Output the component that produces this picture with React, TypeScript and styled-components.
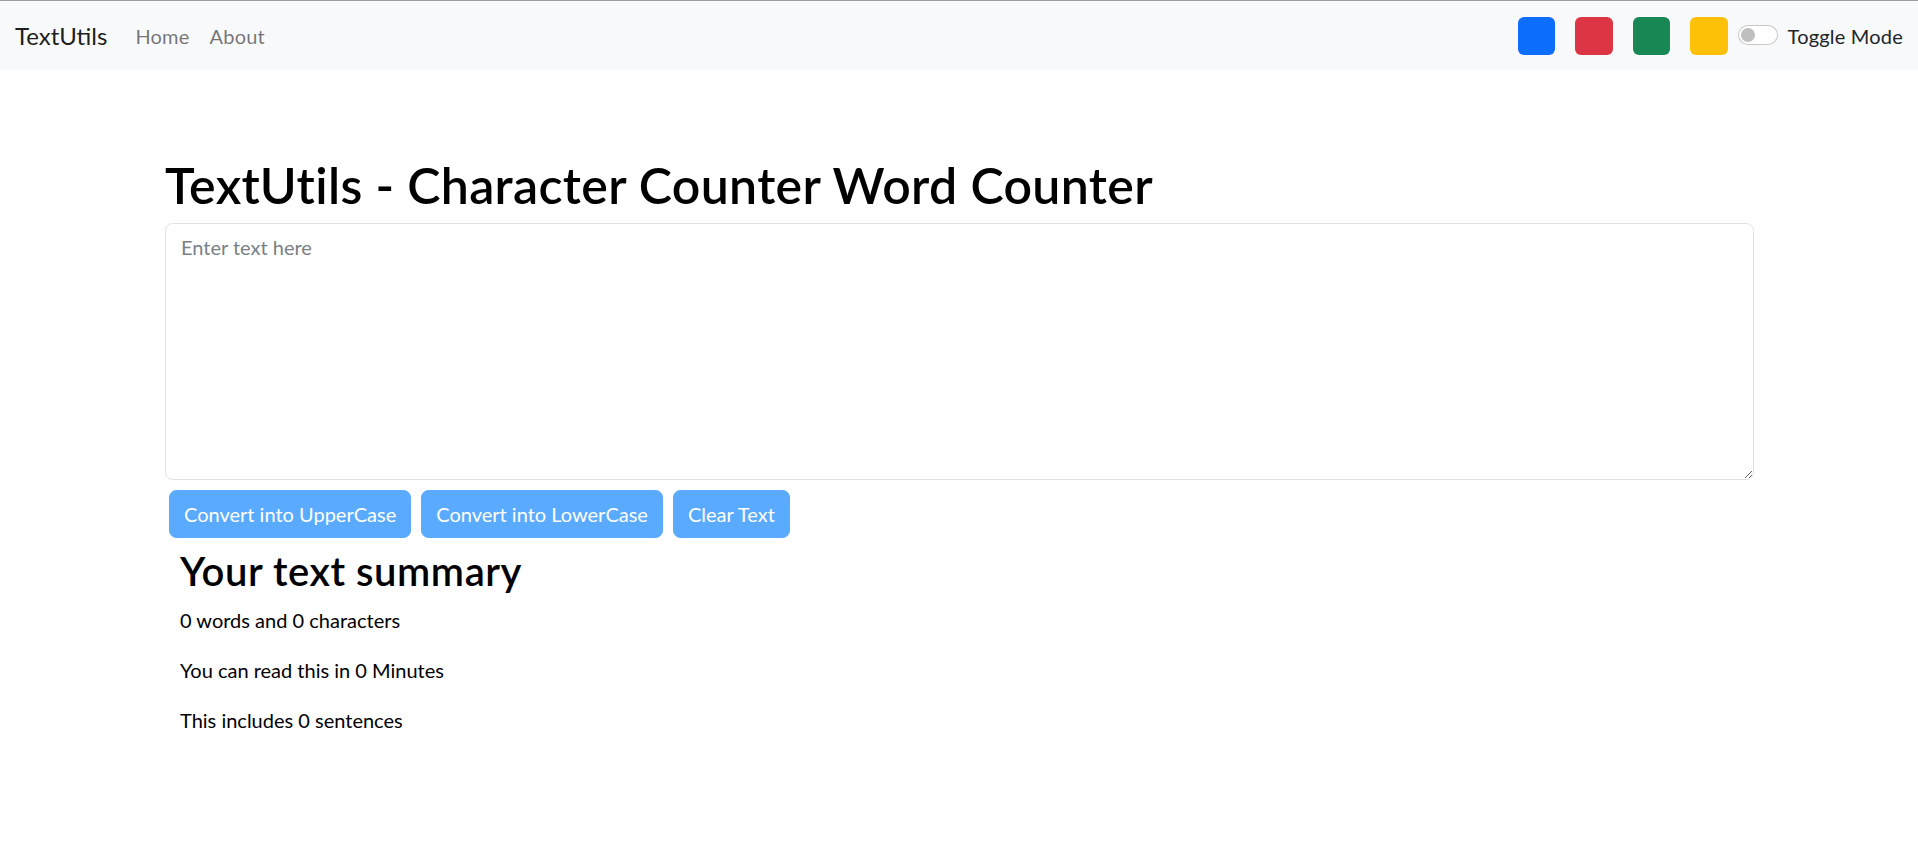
import React, { useState } from "react";
import styled, { createGlobalStyle } from "styled-components";

const GlobalStyle = createGlobalStyle`
  *, *::before, *::after { box-sizing: border-box; }
  html, body { margin: 0; padding: 0; background: #fff; }
  body {
    font-family: "Lato", "Open Sans", "Noto Sans", sans-serif;
    font-size: 20px;
    line-height: 1.5;
    color: #000;
  }
`;

const NavBar = styled.nav`
  height: 70px;
  border-top: 1px solid #9aa0a6;
  background: #f8f9fa;
  display: flex;
  align-items: center;
  justify-content: space-between;
  padding: 0 15px;
`;

const NavLeft = styled.div`
  display: flex;
  align-items: center;
`;

const Brand = styled.a`
  font-size: 24px;
  line-height: 1.5;
  color: rgba(0, 0, 0, 0.9);
  text-decoration: none;
  margin-right: 18px;
`;

const NavLink = styled.a`
  font-size: 20px;
  padding: 10px;
  color: rgba(0, 0, 0, 0.55);
  text-decoration: none;
  letter-spacing: 0.2px;
`;

const NavRight = styled.div`
  display: flex;
  align-items: center;
  gap: 10px;
`;

const Swatches = styled.div`
  display: flex;
  align-items: center;
  gap: 20px;
`;

const Swatch = styled.div<{ $color: string }>`
  width: 37.5px;
  height: 38px;
  border-radius: 6px;
  background: ${(p) => p.$color};
  cursor: pointer;
`;

const SwitchWrap = styled.label`
  display: flex;
  align-items: center;
  gap: 10px;
  color: #212529;
  font-size: 20px;
  letter-spacing: 0.2px;
  cursor: pointer;
`;

const SwitchTrack = styled.span`
  position: relative;
  display: inline-block;
  width: 40px;
  height: 20px;
  border: 1px solid rgba(0, 0, 0, 0.22);
  border-radius: 20px;
  background: #fff;
  margin-top: -1px;
`;

const SwitchKnob = styled.span`
  position: absolute;
  left: 2px;
  top: 2px;
  width: 14px;
  height: 14px;
  border-radius: 50%;
  background: #bfbfbf;
`;

const Main = styled.main`
  padding: 85px 164px 40px 165px;
`;

const Title = styled.h1`
  margin: 0 0 8px;
  font-size: 50px;
  line-height: 60px;
  font-weight: 600;
  letter-spacing: 0.35px;
  color: #000;
`;

const TextArea = styled.textarea`
  display: block;
  width: 100%;
  height: 257px;
  padding: 7.5px 15px;
  font-family: inherit;
  font-size: 20px;
  line-height: 1.5;
  color: #212529;
  background: #fff;
  border: 1px solid #dee2e6;
  border-radius: 7.5px;
  outline: none;
  &::placeholder {
    color: #7a8087;
  }
`;

const ButtonRow = styled.div`
  display: flex;
  gap: 10px;
  padding: 0 4px;
  margin-top: 10px;
`;

const ActionButton = styled.button`
  height: 47.5px;
  padding: 7.5px 14px;
  font-family: inherit;
  font-size: 20px;
  line-height: 30px;
  color: #fff;
  background: #5aabff;
  border: 1px solid #5aabff;
  border-radius: 7.5px;
  cursor: pointer;
`;

const Summary = styled.section`
  padding: 9px 15px 0;
`;

const SummaryTitle = styled.h2`
  margin: 0 0 10px;
  font-size: 40px;
  line-height: 48px;
  font-weight: 600;
  letter-spacing: 0.55px;
  color: #000;
`;

const Para = styled.p`
  margin: 0 0 20px;
  font-size: 20px;
  line-height: 30px;
  color: #000;
`;

const swatchColors = ["#0d6efd", "#dc3545", "#198754", "#ffc107"];

export default function App() {
  const [text, setText] = useState("");
  const words = text.split(/\s+/).filter((w) => w.length > 0).length;
  const sentences = text.split(/[.!?]+/).filter((s) => s.trim().length > 0).length;

  return (
    <>
      <GlobalStyle />
      <NavBar>
        <NavLeft>
          <Brand href="#">TextUtils</Brand>
          <NavLink href="#">Home</NavLink>
          <NavLink href="#">About</NavLink>
        </NavLeft>
        <NavRight>
          <Swatches>
            {swatchColors.map((c) => (
              <Swatch key={c} $color={c} />
            ))}
          </Swatches>
          <SwitchWrap>
            <SwitchTrack>
              <SwitchKnob />
            </SwitchTrack>
            Toggle Mode
          </SwitchWrap>
        </NavRight>
      </NavBar>
      <Main>
        <Title>TextUtils - Character Counter Word Counter</Title>
        <TextArea
          placeholder="Enter text here"
          value={text}
          onChange={(e) => setText(e.target.value)}
        />
        <ButtonRow>
          <ActionButton onClick={() => setText(text.toUpperCase())}>Convert into UpperCase</ActionButton>
          <ActionButton onClick={() => setText(text.toLowerCase())}>Convert into LowerCase</ActionButton>
          <ActionButton onClick={() => setText("")}>Clear Text</ActionButton>
        </ButtonRow>
        <Summary>
          <SummaryTitle>Your text summary</SummaryTitle>
          <Para>
            {words} words and {text.length} characters
          </Para>
          <Para>You can read this in {Math.round(0.008 * words)} Minutes</Para>
          <Para>This includes {sentences} sentences</Para>
        </Summary>
      </Main>
    </>
  );
}
